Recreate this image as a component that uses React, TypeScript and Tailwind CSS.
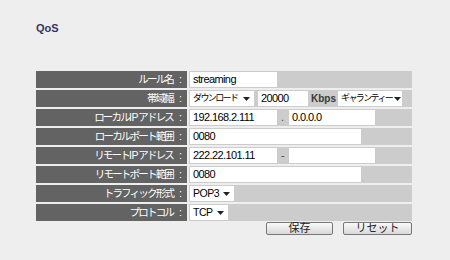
import React from 'react';

const jp = { fontFamily: '"Liberation Sans", "Noto Sans CJK JP", sans-serif' };

function Field({ w, value }: { w: string; value: string }) {
  return (
    <div className={`${w} h-[15px] bg-white flex items-center px-[3px] text-[11px] tracking-[-0.6px] text-black leading-none whitespace-nowrap`}>
      {value}
    </div>
  );
}

function Select({ w, value, jpText }: { w: string; value: string; jpText?: boolean }) {
  return (
    <div className={`${w} h-[15px] bg-white flex items-center justify-between gap-[2px] pl-[3px] pr-[4px] text-black leading-none whitespace-nowrap`}>
      <span className={jpText ? 'text-[9px] tracking-[-1.6px]' : 'text-[10.5px] tracking-[-0.5px]'}>{value}</span>
      <svg width="7" height="4" viewBox="0 0 7 4" className="shrink-0">
        <path d="M0 0h7L3.5 4z" fill="#222" />
      </svg>
    </div>
  );
}

// latin parts keep normal spacing, kana gets squeezed
function Label({ text }: { text: string }) {
  const parts = text.split(/([A-Za-z]+)/).filter(Boolean);
  return (
    <span>
      {parts.map((p, i) =>
        /[A-Za-z]/.test(p) ? (
          <span key={i} className="tracking-[-0.3px]">{p}</span>
        ) : (
          <span key={i} className="tracking-[-1.8px]">{p}</span>
        )
      )}
    </span>
  );
}

function Row({ label, children }: { label: string; children: React.ReactNode }) {
  return (
    <div className="flex h-[17px] gap-[2px]">
      <div className="w-[151px] bg-[#636363] text-white text-[10.5px] flex items-center justify-end pr-[5px] leading-none whitespace-nowrap">
        <Label text={label} />
        <span className="ml-[6px]">:</span>
      </div>
      <div className="flex-1 bg-[#cccccc] flex items-center pl-[1px] gap-[4px]">{children}</div>
    </div>
  );
}

export default function App() {
  return (
    <div className="w-[450px] h-[260px] bg-[#eeeeee] pl-[36px] pt-[22px]" style={jp}>
      <div className="text-[11px] font-bold text-[#333366] leading-[12px] h-[12px]">QoS</div>
      <div className="w-[376px] mt-[37px] flex flex-col gap-[2px] bg-[#eeeeee]">
        <Row label="ルール名">
          <Field w="w-[87px]" value="streaming" />
        </Row>
        <Row label="帯域幅">
          <Select w="w-[64px]" value="ダウンロード" jpText />
          <Field w="w-[50px]" value="20000" />
          <span className="text-[10px] font-bold text-[#3a3a3a] -ml-[1px] -mr-[2px]">Kbps</span>
          <Select w="w-[64px]" value="ギャランティー" jpText />
        </Row>
        <Row label="ローカルIPアドレス">
          <Field w="w-[87px]" value="192.168.2.111" />
          <span className="text-[11px] text-[#444] w-[4px]">.</span>
          <Field w="w-[86px]" value="0.0.0.0" />
        </Row>
        <Row label="ローカルポート範囲">
          <Field w="w-[171px]" value="0080" />
        </Row>
        <Row label="リモートIPアドレス">
          <Field w="w-[87px]" value="222.22.101.11" />
          <span className="text-[11px] text-[#444] w-[4px]">-</span>
          <Field w="w-[86px]" value="" />
        </Row>
        <Row label="リモートポート範囲">
          <Field w="w-[171px]" value="0080" />
        </Row>
        <Row label="トラフィック形式">
          <Select w="w-[44px]" value="POP3" />
        </Row>
        <Row label="プロトコル">
          <Select w="w-[38px]" value="TCP" />
        </Row>
      </div>
      <div className="w-[376px] flex justify-end gap-[10px] mt-[1px]">
        <button className="w-[67px] h-[13px] border border-[#777] rounded-[2px] bg-gradient-to-b from-[#fafafa] to-[#d8d8d8] text-[11px] leading-none text-[#222] flex items-center justify-center">
          保存
        </button>
        <button className="w-[69px] h-[13px] border border-[#777] rounded-[2px] bg-gradient-to-b from-[#fafafa] to-[#d8d8d8] text-[11px] leading-none text-[#222] flex items-center justify-center">
          リセット
        </button>
      </div>
    </div>
  );
}
